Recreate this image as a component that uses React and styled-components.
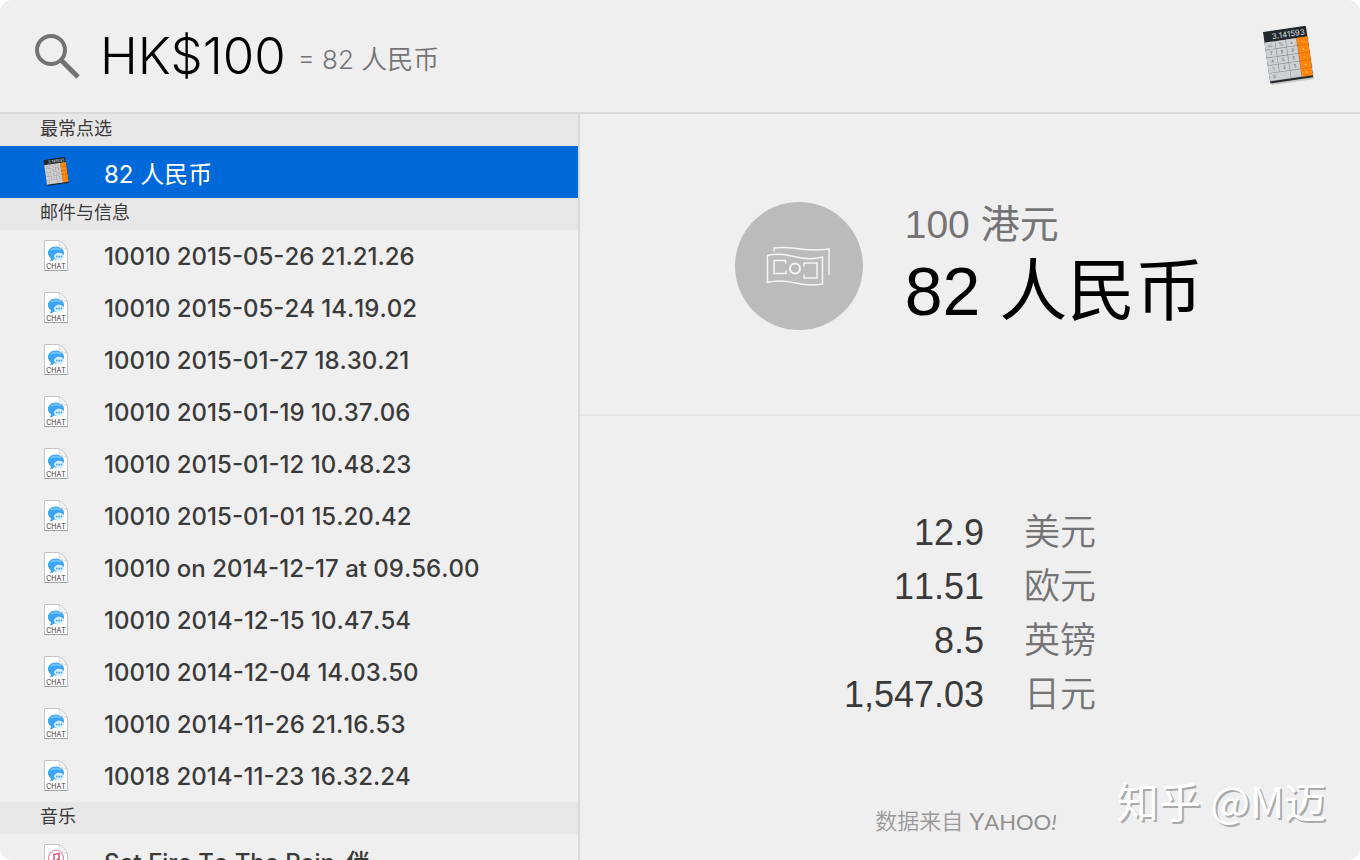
import { useState } from "react";
import styled, { createGlobalStyle, ThemeProvider } from "styled-components";

const theme = {
  colors: {
    panel: "#efefef",
    section: "#e7e7e7",
    line: "#d9d9d9",
    softLine: "#e4e4e4",
    active: "#0069d9",
    text: "#3a3a3a",
    muted: "#747474",
  },
  fonts: {
    ui: `Inter, "Noto Sans CJK SC", sans-serif`,
    detail: `"Liberation Sans", "Noto Sans CJK SC", sans-serif`,
  },
};

const messages = [
  "10010 2015-05-26 21.21.26",
  "10010 2015-05-24 14.19.02",
  "10010 2015-01-27 18.30.21",
  "10010 2015-01-19 10.37.06",
  "10010 2015-01-12 10.48.23",
  "10010 2015-01-01 15.20.42",
  "10010 on 2014-12-17 at 09.56.00",
  "10010 2014-12-15 10.47.54",
  "10010 2014-12-04 14.03.50",
  "10010 2014-11-26 21.16.53",
  "10018 2014-11-23 16.32.24",
];

const sections = [
  { title: "最常点选", icon: "calculator", items: ["82 人民币"] },
  { title: "邮件与信息", icon: "chat", items: messages },
  { title: "音乐", icon: "music", items: ["Set Fire To The Rain-伴"] },
];

const rates = [
  { value: "12.9", name: "美元" },
  { value: "11.51", name: "欧元" },
  { value: "8.5", name: "英镑" },
  { value: "1,547.03", name: "日元" },
];

const keyColumns = [0, 11, 22, 33];
const keyRows = [11, 19, 27, 35, 43];
const keyLabels = [
  ["AC", "%", "±", "÷"],
  ["7", "8", "9", "×"],
  ["4", "5", "6", "−"],
  ["1", "2", "3", "+"],
  ["0", "", ".", "="],
];

const CalculatorIcon = ({ size }) => (
  <svg width={size} height={size} viewBox="0 0 64 64" aria-hidden="true">
    <g transform="matrix(.97 -.14 .14 .97 7 8)">
      <rect x="1" y="1" width="44" height="54" fill="#000" opacity=".15" />
      <rect width="44" height="53" fill="#22272c" />
      <rect y="11" width="44" height="40" fill="#8c8e91" />
      <rect x="33" y="11" width="11" height="40" fill="#c96a10" />
      {keyRows.map((y, row) =>
        keyColumns.map((x, col) => {
          if (row === 4 && col === 1) return null;
          const wide = row === 4 && col === 0;
          return (
            <g key={`${x}-${y}`}>
              <rect
                x={x}
                y={y}
                width={wide ? 21.4 : col === 3 ? 11 : 10.4}
                height="7.4"
                fill={col === 3 ? "#ff8408" : "#cfd0d2"}
              />
              <text
                x={x + 5.3}
                y={y + 5.4}
                fontSize={row === 0 && col === 0 ? 3.5 : 4.5}
                textAnchor="middle"
                fill={col === 3 ? "#ffe3c0" : "#5b5d60"}
              >
                {keyLabels[row][col]}
              </text>
            </g>
          );
        })
      )}
      <text x="42" y="8.6" fontSize="8" textAnchor="end" fill="#dfe5e8">
        3.141593
      </text>
    </g>
  </svg>
);

const Page = ({ children }) => (
  <svg width="26" height="34" viewBox="0 1 26 34" aria-hidden="true">
    <path d="M1.5 2.5h14c4 1.500 8 6 9 10v20h-23z" fill="#fff" stroke="#c4c4c4" />
    <path d="M1.5 32.500h23" stroke="#a0a0a0" />
    {children}
    <path d="M15.5 2.5c1.500 3 1.500 5 1 7.500 2.500-.5 6 0 8 2.500-1-4-5-8.500-9-10z" fill="#f4f4f4" stroke="#cbcbcb" strokeWidth=".8" />
  </svg>
);

const ChatIcon = () => (
  <Page>
    <path
      d="M13 8.500c-4.800 0-8 2.900-8 6.500 0 2.300 1.200 4 3 5.200-.2 1.500-.8 2.300-1.500 3 2 0 3.500-.8 4.500-1.700 6 .6 10-2.600 10-6.500 0-3.600-3.200-6.500-8-6.500z"
      fill="#3ba4f2"
    />
    <path d="M6.500 12.700c1.500-2.500 4.500-3.700 7.500-3.200 2.500.4 4.500 1.500 5.500 3.200-4-1.200-9-1.200-13 0z" fill="#6cc2fb" />
    <ellipse cx="16" cy="18.500" rx="5" ry="3.700" fill="#d5effd" />
    <path d="M18.500 20.800l2.500 2-3.500-.8z" fill="#d5effd" />
    <circle cx="13.800" cy="18.500" r=".9" fill="#4aa8ea" />
    <circle cx="16.100" cy="18.500" r=".9" fill="#4aa8ea" />
    <circle cx="18.400" cy="18.500" r=".9" fill="#4aa8ea" />
    <text x="13" y="30.500" fontSize="7" fontFamily="Inter" fontWeight="400" textAnchor="middle" fill="#333">
      CHAT
    </text>
  </Page>
);

const MusicIcon = () => (
  <Page>
    <circle cx="13" cy="16" r="7.500" fill="#fff" stroke="#e58aa6" strokeWidth="1.200" />
    <path d="M11 19v-6.500l5-1.200v6.500" fill="none" stroke="#d5476f" strokeWidth="1.400" />
    <circle cx="10" cy="19" r="1.500" fill="#8a63d2" />
    <circle cx="15" cy="18" r="1.500" fill="#d5476f" />
  </Page>
);

const icons = {
  calculator: <CalculatorIcon size={32} />,
  chat: <ChatIcon />,
  music: <MusicIcon />,
};

const App = () => {
  const [query, setQuery] = useState("HK$100");
  const [active, setActive] = useState("82 人民币");

  return (
    <ThemeProvider theme={theme}>
      <GlobalStyle />
      <Window>
        <SearchBar>
          <svg width="46" height="46" viewBox="0 0 46 46" aria-hidden="true">
            <circle cx="17" cy="17" r="14" fill="none" stroke="#737373" strokeWidth="4" />
            <path d="M27 27L44 44" stroke="#737373" strokeWidth="5" />
          </svg>
          <QueryLine>
            <Query
              aria-label="搜索"
              value={query}
              onChange={(e) => setQuery(e.target.value)}
              spellCheck={false}
            />
            <Answer>= 82 人民币</Answer>
          </QueryLine>
          <CalculatorIcon size={64} />
        </SearchBar>
        <Body>
          <Results>
            {sections.map((section) => (
              <section key={section.title}>
                <SectionTitle>{section.title}</SectionTitle>
                {section.items.map((item) => (
                  <Row key={item} $active={active === item} onClick={() => setActive(item)}>
                    <IconSlot>{icons[section.icon]}</IconSlot>
                    {item}
                  </Row>
                ))}
              </section>
            ))}
          </Results>
          <Detail>
            <Hero>
              <MoneyCircle>
                <svg width="128" height="128" viewBox="0 0 128 128" fill="none" stroke="#f4f4f4" strokeWidth="1.500" aria-hidden="true">
                  <path d="M32.500 53.500C44 51 52 53 61 55s18 2.500 26.500 0v27c-9 2-18 1-27-1s-19-3-28-.5z" />
                  <path d="M39 49.500v-3.500c11-1.500 18-.5 27 1s18 1.500 28 0v26" />
                  <path d="M50.500 61.500V58.500H39v13h12v-3" />
                  <path d="M69 64.500v-3.500h13v15H69v-3.500" />
                  <circle cx="60" cy="66.500" r="5" strokeWidth="2" />
                </svg>
              </MoneyCircle>
              <Conversion>
                <Source>100 港元</Source>
                <Converted>82 人民币</Converted>
              </Conversion>
            </Hero>
            <More>
              <Rates>
                <tbody>
                  {rates.map((rate) => (
                    <tr key={rate.name}>
                      <Value>{rate.value}</Value>
                      <Currency scope="row">{rate.name}</Currency>
                    </tr>
                  ))}
                </tbody>
              </Rates>
              <Credit>
                数据来自
                <Yahoo href="#yahoo">
                  <big>Y</big>AHOO<i>!</i>
                </Yahoo>
              </Credit>
            </More>
          </Detail>
        </Body>
        <Watermark>知乎 @M迈</Watermark>
      </Window>
    </ThemeProvider>
  );
};

export default App;

const GlobalStyle = createGlobalStyle`
  * {
    box-sizing: border-box;
  }

  body {
    margin: 0;
    background: #fff;
  }
`;

const Window = styled.main`
  position: relative;
  display: flex;
  flex-direction: column;
  height: 100vh;
  overflow: hidden;
  border-radius: 12px;
  background: ${(props) => props.theme.colors.panel};
  color: ${(props) => props.theme.colors.text};
  font-family: ${(props) => props.theme.fonts.ui};
  font-kerning: none;
`;

const SearchBar = styled.header`
  display: flex;
  flex-shrink: 0;
  align-items: center;
  gap: 20px;
  height: 114px;
  padding: 0 40px 0 34px;
  border-bottom: 2px solid ${(props) => props.theme.colors.line};
`;

const QueryLine = styled.div`
  display: flex;
  flex: 1;
  align-items: center;
  gap: 12px;
`;

const Query = styled.input`
  field-sizing: content;
  padding: 0;
  border: 0;
  outline: 0;
  background: none;
  color: #000;
  font-family: inherit;
  font-size: 51px;
  font-weight: 300;
  line-height: 64px;
`;

const Answer = styled.output`
  padding-top: 8px;
  color: ${(props) => props.theme.colors.muted};
  font-size: 26px;
  font-weight: 350;
  line-height: 32px;
`;

const Body = styled.div`
  display: grid;
  flex: 1;
  grid-template-columns: 580fr 780fr;
  min-height: 0;
`;

const Results = styled.nav`
  overflow: hidden;
  border-right: 2px solid ${(props) => props.theme.colors.line};
`;

const SectionTitle = styled.h2`
  margin: 0;
  padding: 0 40px 2px;
  background: ${(props) => props.theme.colors.section};
  font-size: 18px;
  font-weight: 400;
  line-height: 30px;
`;

const Row = styled.button`
  display: flex;
  align-items: center;
  gap: 32px;
  width: 100%;
  height: 52px;
  padding: 0 40px;
  border: 0;
  background: ${(props) => (props.$active ? props.theme.colors.active : "none")};
  color: ${(props) => (props.$active ? "#fff" : "inherit")};
  font-family: inherit;
  font-size: 24px;
  font-weight: ${(props) => (props.$active ? 400 : 500)};
  font-kerning: inherit;
  text-align: left;
  white-space: nowrap;
`;

const IconSlot = styled.span`
  display: flex;
  justify-content: center;
  width: 32px;
`;

const Detail = styled.div`
  display: flex;
  flex-direction: column;
  font-family: ${(props) => props.theme.fonts.detail};
`;

const Hero = styled.section`
  display: flex;
  align-items: center;
  justify-content: center;
  gap: 42px;
  height: 302px;
  padding: 4px 2px 0 0;
  border-bottom: 2px solid ${(props) => props.theme.colors.softLine};
`;

const MoneyCircle = styled.div`
  width: 128px;
  height: 128px;
  border-radius: 50%;
  background: #bbb;
`;

const Conversion = styled.div`
  padding-bottom: 4px;
`;

const Source = styled.div`
  color: ${(props) => props.theme.colors.muted};
  font-size: 39px;
  line-height: 54px;
`;

const Converted = styled.div`
  color: #000;
  font-size: 68px;
  line-height: 78px;
`;

const More = styled.section`
  display: flex;
  flex: 1;
  flex-direction: column;
  align-items: center;
  justify-content: space-between;
  padding: 90px 0 20px;
`;

const Rates = styled.table`
  border-collapse: collapse;
  font-size: 36px;
  line-height: 54px;
`;

const Value = styled.td`
  padding: 0 40px 0 0;
  text-align: right;
`;

const Currency = styled.th`
  padding: 0;
  color: ${(props) => props.theme.colors.muted};
  font-weight: 350;
`;

const Credit = styled.div`
  display: flex;
  align-items: center;
  gap: 6px;
  padding-right: 8px;
  color: #999;
  font-size: 22px;
  font-weight: 350;
  line-height: 36px;
`;

const Yahoo = styled.a`
  color: #8f8f8f;
  font-family: Lato, sans-serif;
  font-size: 22px;
  font-weight: 400;
  text-decoration: none;

  big {
    font-size: 24px;
  }
`;

const Watermark = styled.div`
  position: absolute;
  right: 34px;
  bottom: 32px;
  color: #fff;
  font-family: "Noto Sans CJK SC", sans-serif;
  font-size: 42px;
  line-height: 56px;
  text-shadow: 2px 2px 0 #aaa;
`;
